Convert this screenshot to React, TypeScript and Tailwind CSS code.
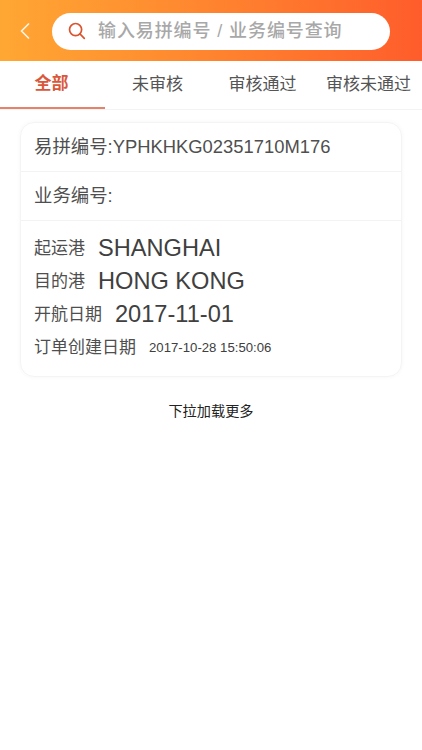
import React, { useState } from 'react';
import { ChevronLeft } from 'lucide-react';

const tabs = [
  { label: '全部', width: 'w-[105px] pr-[2px]' },
  { label: '未审核', width: 'w-[105px]' },
  { label: '审核通过', width: 'w-[105px]' },
  { label: '审核未通过', width: 'w-[107px]' },
];

const font = "font-['Liberation_Sans','Noto_Sans_CJK_SC',sans-serif]";

const App: React.FC = () => {
  const [active] = useState(0);

  return (
    <div className={`h-[750px] w-[422px] overflow-hidden bg-white ${font}`}>
      <div className="flex h-[61px] items-center bg-gradient-to-r from-[#ffa733] to-[#ff5c2b] pt-px pl-[11px]">
        <ChevronLeft className="h-[28px] w-[28px] text-[#fff3e0]" strokeWidth={1.5} />
        <div className="ml-[13px] flex h-[37px] w-[338px] items-center rounded-full bg-white pl-4">
          <svg width="18" height="18" viewBox="0 0 19 19" fill="none" stroke="#d9542f" strokeWidth="1.8" strokeLinecap="round">
            <circle cx="8" cy="8" r="6.4" />
            <path d="M12.6 12.6l4.6 4.6" />
          </svg>
          <span className="ml-[12px] text-[18px] font-medium tracking-[0.9px] text-[#a8a8a8]">输入易拼编号 / 业务编号查询</span>
        </div>
      </div>

      <div className="flex h-[49px] border-b border-[#f3f3f3]">
        {tabs.map((tab, index) => (
          <div
            key={tab.label}
            className={`${tab.width} flex items-center justify-center whitespace-nowrap text-[17px] ${
              index === active ? 'border-b-2 border-[#e8816a] font-bold text-[#d9583c]' : 'text-[#555555]'
            }`}
          >
            {tab.label}
          </div>
        ))}
      </div>

      <div className="mx-5 mt-[12px] rounded-[14px] border border-[#f4f4f4] shadow-[0_0_4px_rgba(0,0,0,0.04)]">
        <div className="flex h-[49px] items-center border-b border-[#f3f3f3] px-[13px] text-[18.4px] text-[#4f4f4f]">
          易拼编号:YPHKHKG02351710M176
        </div>
        <div className="flex h-[49px] items-center border-b border-[#f3f3f3] px-[13px] text-[18.4px] text-[#4f4f4f]">
          业务编号:
        </div>
        <div className="flex flex-col gap-[4px] px-[13px] pt-[13px] pb-[14px] text-[#4f4f4f]">
          <div className="flex h-[29px] items-center">
            <span className="text-[17px]">起运港</span>
            <span className="ml-[13px] text-[23.6px] text-[#404040]">SHANGHAI</span>
          </div>
          <div className="flex h-[29px] items-center">
            <span className="text-[17px]">目的港</span>
            <span className="ml-[13px] text-[23.6px] text-[#404040]">HONG KONG</span>
          </div>
          <div className="flex h-[29px] items-center">
            <span className="text-[17px]">开航日期</span>
            <span className="ml-[13px] text-[23.6px] text-[#404040]">2017-11-01</span>
          </div>
          <div className="flex h-[29px] items-center">
            <span className="text-[17px]">订单创建日期</span>
            <span className="ml-[13px] text-[13.2px] text-[#404040]">2017-10-28 15:50:06</span>
          </div>
        </div>
      </div>

      <div className="mt-[24px] text-center text-[14.2px] text-[#222222]">下拉加载更多</div>
    </div>
  );
};

export default App;
